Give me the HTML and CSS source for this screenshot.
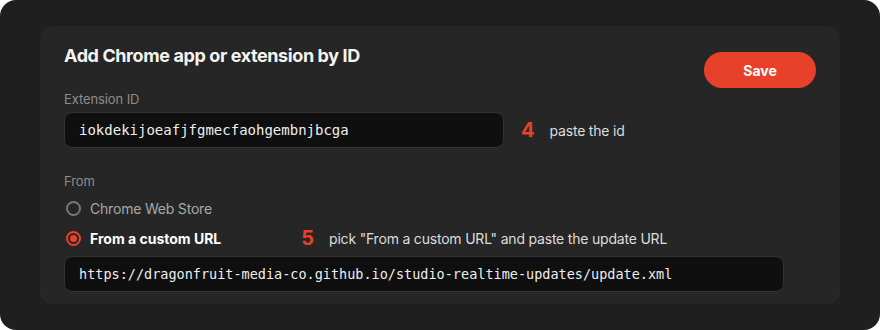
FILE: index.html
```html
<!DOCTYPE html>
<html lang="en">
<head>
<meta charset="utf-8">
<title>Add Chrome app or extension by ID</title>
<link rel="stylesheet" href="styles.css">
</head>
<body>
<div class="frame">
  <section class="card">
    <header class="card-head">
      <h2 class="title">Add Chrome app or extension by ID</h2>
      <button class="save" type="button">Save</button>
    </header>
    <div class="field">
      <div class="label">Extension ID</div>
      <div class="row">
        <div class="input id-input">iokdekijoeafjfgmecfaohgembnjbcga</div>
        <div class="hint hint-id"><span class="step">4</span><span class="hint-text">paste the id</span></div>
      </div>
    </div>
    <div class="field from">
      <div class="label">From</div>
      <div class="radio-row">
        <span class="radio"></span><span class="radio-text">Chrome Web Store</span>
      </div>
      <div class="radio-row">
        <span class="radio checked"></span><span class="radio-text strong">From a custom URL</span>
        <div class="hint hint-url"><span class="step">5</span><span class="hint-text">pick "From a custom URL" and paste the update URL</span></div>
      </div>
      <div class="input url-input">https://dragonfruit-media-co.github.io/studio-realtime-updates/update.xml</div>
    </div>
  </section>
</div>
</body>
</html>
```
FILE: styles.css
```css
* { box-sizing: border-box; }
html, body { margin: 0; padding: 0; background: #ffffff; }
body { font-family: Inter, "Noto Sans", sans-serif; }

.frame {
  width: 880px;
  height: 330px;
  background: #1f1f1f;
  border-radius: 16px;
  padding: 26px 40px;
}

.card {
  height: 278px;
  background: #262626;
  border-radius: 12px;
  padding: 18px 24px 12px;
}

.card-head {
  display: flex;
  justify-content: space-between;
  align-items: flex-start;
}

.title {
  margin: 0;
  font-size: 18px;
  line-height: 24px;
  font-weight: 700;
  color: #f4f4f4;
  letter-spacing: -0.4px;
}

.save {
  margin-top: 8px;
  width: 112px;
  height: 36px;
  border: none;
  border-radius: 18px;
  background: #e8412a;
  color: #ffffff;
  font-family: Inter, sans-serif;
  font-size: 14px;
  font-weight: 700;
}

.field { margin-top: 3px; }
.from { margin-top: 25px; }

.label {
  font-size: 13px;
  line-height: 16px;
  color: #8c8c8c;
  margin-bottom: 5px;
  letter-spacing: -0.1px;
}

.row { display: flex; align-items: center; }

.input {
  height: 36px;
  background: #0f0f0f;
  border: 1px solid #333333;
  border-radius: 8px;
  padding: 0 14px;
  display: flex;
  align-items: center;
  font-family: "DejaVu Sans Mono", monospace;
  font-size: 14px;
  color: #eeeeee;
}

.id-input { width: 440px; }
.url-input { width: 720px; margin-top: 8px; font-size: 13.5px; }

.hint { display: flex; align-items: center; }
.hint-id { margin-left: 17px; }
.hint-url { margin-left: 80px; }

.step {
  font-size: 20px;
  font-weight: 700;
  color: #e8412a;
  line-height: 24px;
  margin-right: 15px;
}

.hint-text {
  font-size: 14px;
  color: #dddddd;
  letter-spacing: -0.2px;
}

.radio-row {
  display: flex;
  align-items: center;
  height: 20px;
  margin-top: 10px;
}
.label + .radio-row { margin-top: 9px; }

.radio {
  width: 15px;
  height: 15px;
  border-radius: 50%;
  border: 2px solid #777777;
  margin-left: 2px;
  margin-right: 9px;
  display: flex;
  align-items: center;
  justify-content: center;
}
.radio.checked { border-color: #e8412a; }
.radio.checked::after {
  content: "";
  width: 7px;
  height: 7px;
  border-radius: 50%;
  background: #e8412a;
}

.radio-text { font-size: 14px; color: #a8a8a8; letter-spacing: -0.2px; }
.radio-text.strong { color: #ffffff; font-weight: 700; letter-spacing: 0; }
```
